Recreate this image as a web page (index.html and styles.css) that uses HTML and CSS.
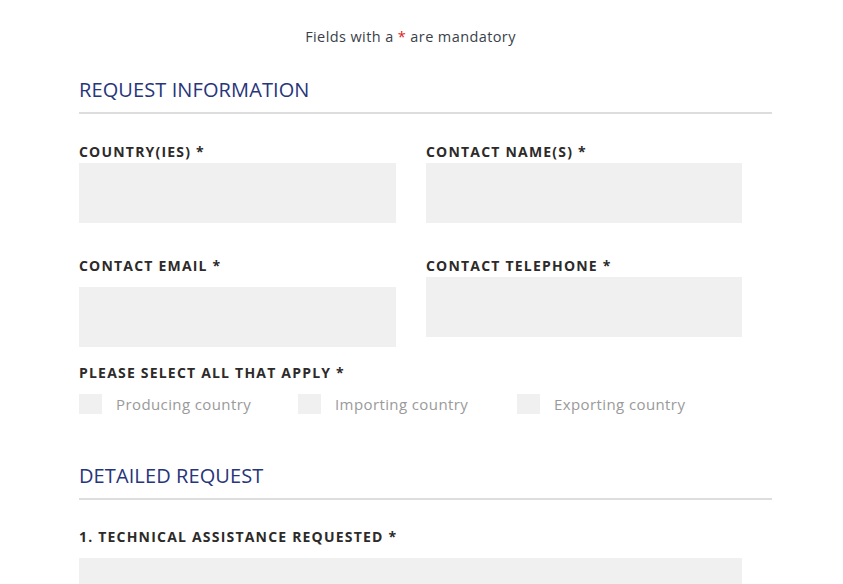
FILE: index.html
```html
<!DOCTYPE html>
<html>
<head>
<meta charset="utf-8">
<link rel="stylesheet" href="styles.css">
</head>
<body>
<div class="page">
  <p class="note">Fields with a <span class="req">*</span> are mandatory</p>

  <h2 class="section-title">REQUEST INFORMATION</h2>
  <div class="rule"></div>

  <div class="grid">
    <div class="field">
      <label class="label">COUNTRY(IES) *</label>
      <div class="input"></div>
    </div>
    <div class="field">
      <label class="label">CONTACT NAME(S) *</label>
      <div class="input"></div>
    </div>
  </div>

  <div class="grid grid-second">
    <div class="field">
      <label class="label">CONTACT EMAIL *</label>
      <div class="input input-email"></div>
    </div>
    <div class="field">
      <label class="label">CONTACT TELEPHONE *</label>
      <div class="input"></div>
    </div>
  </div>

  <div class="apply">
    <label class="label">PLEASE SELECT ALL THAT APPLY *</label>
    <div class="checks">
      <div class="check"><span class="box"></span><span class="check-text">Producing country</span></div>
      <div class="check"><span class="box"></span><span class="check-text">Importing country</span></div>
      <div class="check"><span class="box"></span><span class="check-text">Exporting country</span></div>
    </div>
  </div>

  <h2 class="section-title section-two">DETAILED REQUEST</h2>
  <div class="rule"></div>

  <div class="field field-wide">
    <label class="label">1. TECHNICAL ASSISTANCE REQUESTED *</label>
    <div class="input input-wide"></div>
  </div>
</div>
</body>
</html>
```

FILE: styles.css
```css
html, body {
  margin: 0;
  padding: 0;
  background: #ffffff;
}

body {
  font-family: "Open Sans", "DejaVu Sans", sans-serif;
  color: #333333;
  overflow: hidden;
  height: 584px;
}

.page {
  width: 693px;
  margin-left: 79px;
}

.note {
  margin: 0;
  padding-top: 27px;
  text-align: center;
  font-size: 14.5px;
  line-height: 20px;
  color: #3a3f4a;
  letter-spacing: 0.4px;
  width: 663px;
}

.req {
  color: #e02020;
}

.section-title {
  margin: 0;
  margin-top: 31px;
  font-size: 20px;
  font-weight: 400;
  line-height: 24px;
  color: #27357a;
  letter-spacing: 0.1px;
}

.section-two {
  margin-top: 50px;
}

.rule {
  height: 2px;
  background: #dddddd;
  margin-top: 10px;
}

.grid {
  display: grid;
  grid-template-columns: 317px 316px;
  column-gap: 30px;
  margin-top: 29px;
  align-items: start;
}

.grid-second {
  margin-top: 34px;
}

.field {
  display: flex;
  flex-direction: column;
}

.label {
  display: block;
  font-size: 14px;
  font-weight: 700;
  line-height: 18px;
  letter-spacing: 1.2px;
  color: #2d2a2a;
}

.input {
  margin-top: 2px;
  height: 60px;
  background: #f0f0f0;
}

.input-email {
  margin-top: 12px;
}

.apply {
  margin-top: 17px;
}

.checks {
  display: flex;
  margin-top: 12px;
  align-items: center;
}

.check {
  display: flex;
  align-items: center;
  width: 219px;
}

.box {
  width: 23px;
  height: 20px;
  background: #f0f0f0;
  flex: none;
}

.check-text {
  margin-left: 14px;
  font-size: 15px;
  color: #9a9a9a;
  letter-spacing: 0.4px;
}

.field-wide {
  margin-top: 28px;
}

.input-wide {
  width: 663px;
  margin-top: 12px;
  height: 60px;
}
```
